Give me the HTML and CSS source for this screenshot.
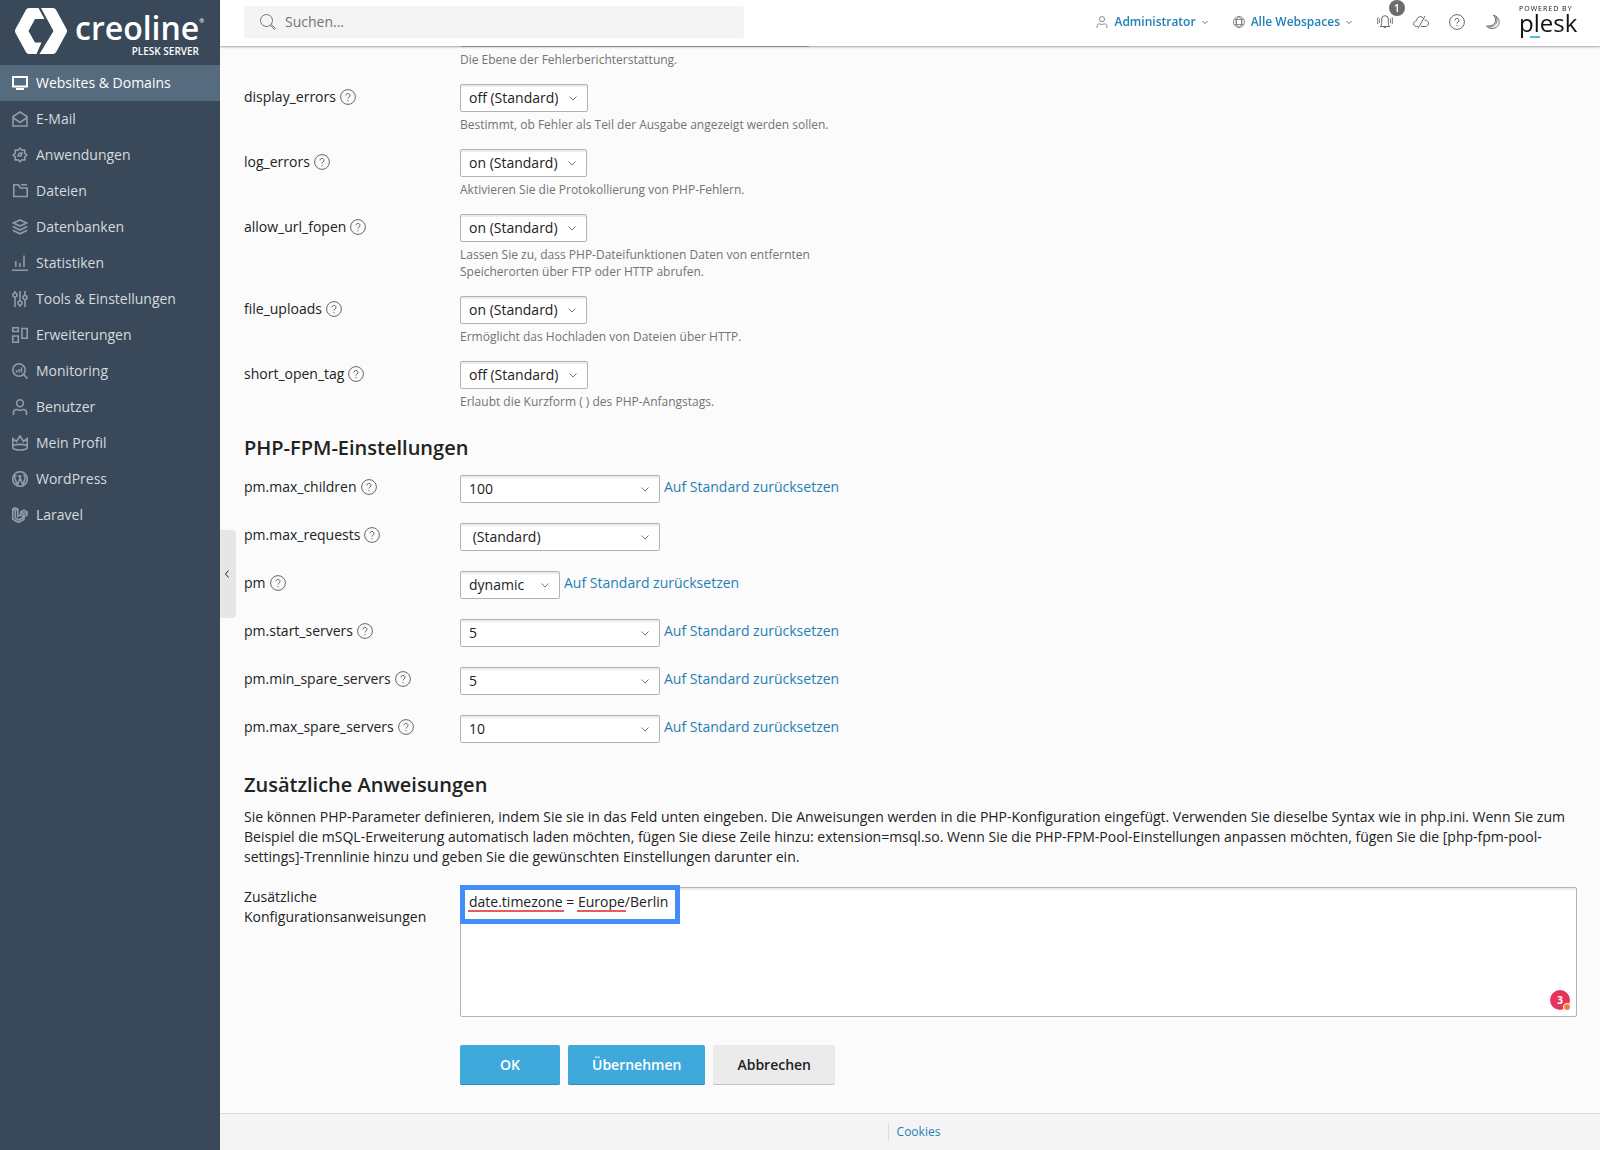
FILE: index.html
```html
<!DOCTYPE html>
<html lang="de">
<head>
    <meta charset="UTF-8">
    <meta name="viewport" content="width=device-width, initial-scale=1.0">
    <title>PHP-Einstellungen</title>
    <link rel="stylesheet" href="styles.css">
</head>
<body>
    <svg class="sprite" aria-hidden="true">
        <symbol id="icon-help" viewBox="0 0 16 16">
            <circle cx="8" cy="8" r="7.4"/>
            <path d="M6 6.400a2 2 0 1 1 3 1.700c-.7.400-1 .7-1 1.500M8 11v1.200"/>
        </symbol>
        <symbol id="icon-down" viewBox="0 0 8 8">
            <path d="M1.500 3 4 5.500 6.500 3"/>
        </symbol>
        <symbol id="icon-user" viewBox="0 0 16 16">
            <circle cx="8" cy="4.200" r="3.400"/>
            <path d="M1.500 16v-2.500c0-1.700 1-3 3-3 1.500 0 2 .8 3.500.8s2-.8 3.500-.8c2 0 3 1.300 3 3V16"/>
        </symbol>
    </svg>

    <aside class="sidebar">
        <a href="#" class="logo">
            <svg class="logo-mark" viewBox="0 0 52 46">
                <path d="M14 0h9.500l6 11H20l-6.500 12L20 34.500h6.500L21.500 46H14q-2 0-3-1.700L.5 25q-1-2 0-4L11 1.700Q12 0 14 0z"/>
                <path d="M26 0h12q2 0 3 1.700L51.500 21q1 2 0 4L41 44.300Q40 46 38 46H24.500L38.500 23z"/>
            </svg>
            <span class="logo-text">
                <span class="logo-name">creoline<sup>®</sup></span>
                <span class="logo-sub">PLESK SERVER</span>
            </span>
        </a>
        <nav class="menu">
            <a href="#" class="menu-item active">
                <svg viewBox="0 0 16 16"><path d="M1 2h14v9.500H1zM4 14h8"/></svg>
                Websites &amp; Domains
            </a>
            <a href="#" class="menu-item">
                <svg viewBox="0 0 16 16"><path d="M1 5.500 8 1l7 4.500V15H1zM1.500 7 8 11.500 14.500 7"/></svg>
                E-Mail
            </a>
            <a href="#" class="menu-item">
                <svg viewBox="0 0 16 16"><path d="M8 1.200 9.900 3.300 12.800 3.200 12.700 6.100 14.800 8 12.700 9.900 12.800 12.800 9.900 12.700 8 14.800 6.100 12.700 3.200 12.800 3.300 9.900 1.200 8 3.300 6.100 3.200 3.200 6.100 3.300z"/><path d="m6 9 1-2.500L10 6 9 9z"/></svg>
                Anwendungen
            </a>
            <a href="#" class="menu-item">
                <svg viewBox="0 0 16 16"><path d="M1.800 1.800h4.500l2 3.200h6.900v8.500H1.800zM9 1.800h6"/></svg>
                Dateien
            </a>
            <a href="#" class="menu-item">
                <svg viewBox="0 0 16 16"><path d="m8 1 6.500 3L8 7 1.500 4zM.8 7.500 8 11l7.200-3.500M.8 11.200 8 14.800l7.200-3.600"/></svg>
                Datenbanken
            </a>
            <a href="#" class="menu-item">
                <svg viewBox="0 0 16 16"><path d="M0 15.200h16M3.800 6v6M8 8v4M12 .5V12"/></svg>
                Statistiken
            </a>
            <a href="#" class="menu-item">
                <svg viewBox="0 0 16 16"><circle cx="3" cy="4" r="2"/><circle cx="8" cy="12" r="2"/><circle cx="13" cy="6.500" r="2"/><path d="M3 0v2M3 6v10M8 0v10M8 14v2M13 0v4.500M13 8.500V16"/></svg>
                Tools &amp; Einstellungen
            </a>
            <a href="#" class="menu-item">
                <svg viewBox="0 0 16 16"><path d="M.8.800h5.500v3.700H.8zM.8 9h5.500v6.200H.8zM10 1.500h5.200v9.700H10z"/></svg>
                Erweiterungen
            </a>
            <a href="#" class="menu-item">
                <svg viewBox="0 0 16 16"><circle cx="7" cy="7" r="6.200"/><path d="m11.500 11.500 4 4M4.500 7v2.500M7 6v3.500M9.500 4.500v5"/></svg>
                Monitoring
            </a>
            <a href="#" class="menu-item">
                <svg viewBox="0 0 16 16"><use href="#icon-user"/></svg>
                Benutzer
            </a>
            <a href="#" class="menu-item">
                <svg viewBox="0 0 16 16"><path d="M.8 3.500 4.500 6.500 8 1l3.500 5.500 3.700-3V13c-2 2.700-12.400 2.700-14.400 0zM1.500 10.500c3-1.500 10-1.500 13 0"/></svg>
                Mein Profil
            </a>
            <a href="#" class="menu-item">
                <svg viewBox="0 0 16 16"><circle cx="8" cy="8" r="7.300"/><path d="m2 5 3.500 9L8 7.500 6.800 4.800M7.500 5l3.300 9 2.400-7c.4-1.500-1.500-2-1.200-3.500M1.700 5h3M6 5h3.500"/></svg>
                WordPress
            </a>
            <a href="#" class="menu-item">
                <svg viewBox="0 0 16 16"><path d="M.8 2 3.300.8 5.800 2v7.500l3-1.700V5l3-1.800L15 5v3l-3 1.700v2.500L6.500 15.500.8 12.200zM.8 2l2.500 1.300V11l3.200 2 5.300-3M3.300 3.300 5.800 2M8.800 5l3 1.700L15 5M11.800 6.700v3l-3-1.900"/></svg>
                Laravel
            </a>
        </nav>
    </aside>

    <button type="button" class="collapse" aria-label="Menü einklappen">
        <svg viewBox="0 0 8 8"><path d="M5.500.5 2.500 4l3 3.500"/></svg>
    </button>

    <div class="page">
        <header class="topbar">
            <label class="search">
                <svg viewBox="0 0 16 16"><circle cx="6.500" cy="6.500" r="6"/><path d="m10.700 11.500 1-.8 3.800 3.700-1.100 1.100z"/></svg>
                <input type="search" placeholder="Suchen..." aria-label="Suchen">
            </label>
            <div class="tools">
                <a href="#" class="tool-link">
                    <svg class="icon-small" viewBox="0 0 16 16"><use href="#icon-user"/></svg>
                    Administrator
                    <svg class="icon-arrow"><use href="#icon-down"/></svg>
                </a>
                <a href="#" class="tool-link">
                    <svg class="icon-small" viewBox="0 0 16 16"><circle cx="8" cy="8" r="7.300"/><path d="M8 .7c-5 4-5 10.600 0 14.600M8 .7c5 4 5 10.600 0 14.600M2 4.500h12M2 11.500h12M4.300 4.500v7M11.700 4.500v7"/></svg>
                    Alle Webspaces
                    <svg class="icon-arrow"><use href="#icon-down"/></svg>
                </a>
                <div class="tool-icons">
                    <button type="button" class="tool-button" aria-label="Benachrichtigungen">
                        <svg viewBox="0 0 16 16"><path d="M3.200 12.500c1.200-1 1.500-2 1.500-4V5a3.300 3.300 0 0 1 6.600 0v3.500c0 2 .3 3 1.500 4zM6.800 12.500c0 1.800 2.400 1.800 2.400 0M2.800 4.500c-.7 1.300-.7 3.200 0 4.500M1 3.500c-1 2-1 4.500 0 6.500M13.200 4.500c.7 1.300.7 3.200 0 4.500M15 3.500c1 2 1 4.500 0 6.500"/></svg>
                        <span class="count">1</span>
                    </button>
                    <button type="button" class="tool-button" aria-label="Cloud">
                        <svg viewBox="0 0 16 16"><path d="M5 12.500H3.500C-.5 12.500-.3 7 3.500 6.800 4 2.500 8 1.500 10 4M11.500 6c5.300 0 5.300 6.500.5 6.500H8M12 2 5 14.500"/></svg>
                    </button>
                    <button type="button" class="tool-button" aria-label="Hilfe">
                        <svg><use href="#icon-help"/></svg>
                    </button>
                    <button type="button" class="tool-button" aria-label="Dunkler Modus">
                        <svg viewBox="0 0 16 16"><path d="M8.500 1c8 3 7.500 13-1.500 13.500-2.500 0-4.500-1-5.500-2.500C9.500 13 13.500 6.500 8.500 1zM3 13c7 .5 11-5 8-10.500"/></svg>
                    </button>
                </div>
                <a href="#" class="plesk">
                    <span class="plesk-by">POWERED BY</span>
                    <span class="plesk-name">plesk</span>
                </a>
            </div>
        </header>

        <main class="content">
            <form>
                <div class="field">
                    <div class="field-label"></div>
                    <div class="field-control">
                        <input type="text" class="text-input" aria-labelledby="error-hint">
                        <p class="hint" id="error-hint">Die Ebene der Fehlerberichterstattung.</p>
                    </div>
                </div>
                <div class="field">
                    <div class="field-label"><label for="display_errors">display_errors</label><svg class="help"><use href="#icon-help"/></svg></div>
                    <div class="field-control">
                        <select id="display_errors"><option>off (Standard)</option></select>
                        <p class="hint">Bestimmt, ob Fehler als Teil der Ausgabe angezeigt werden sollen.</p>
                    </div>
                </div>
                <div class="field">
                    <div class="field-label"><label for="log_errors">log_errors</label><svg class="help"><use href="#icon-help"/></svg></div>
                    <div class="field-control">
                        <select id="log_errors"><option>on (Standard)</option></select>
                        <p class="hint">Aktivieren Sie die Protokollierung von PHP-Fehlern.</p>
                    </div>
                </div>
                <div class="field">
                    <div class="field-label"><label for="allow_url_fopen">allow_url_fopen</label><svg class="help"><use href="#icon-help"/></svg></div>
                    <div class="field-control">
                        <select id="allow_url_fopen"><option>on (Standard)</option></select>
                        <p class="hint">Lassen Sie zu, dass PHP-Dateifunktionen Daten von entfernten Speicherorten über FTP oder HTTP abrufen.</p>
                    </div>
                </div>
                <div class="field">
                    <div class="field-label"><label for="file_uploads">file_uploads</label><svg class="help"><use href="#icon-help"/></svg></div>
                    <div class="field-control">
                        <select id="file_uploads"><option>on (Standard)</option></select>
                        <p class="hint">Ermöglicht das Hochladen von Dateien über HTTP.</p>
                    </div>
                </div>
                <div class="field">
                    <div class="field-label"><label for="short_open_tag">short_open_tag</label><svg class="help"><use href="#icon-help"/></svg></div>
                    <div class="field-control">
                        <select id="short_open_tag"><option>off (Standard)</option></select>
                        <p class="hint">Erlaubt die Kurzform ( ) des PHP-Anfangstags.</p>
                    </div>
                </div>

                <h2>PHP-FPM-Einstellungen</h2>
                <div class="field fpm">
                    <div class="field-label"><label for="max_children">pm.max_children</label><svg class="help"><use href="#icon-help"/></svg></div>
                    <div class="field-row">
                        <select id="max_children" class="wide"><option>100</option></select>
                        <a href="#">Auf Standard zurücksetzen</a>
                    </div>
                </div>
                <div class="field fpm">
                    <div class="field-label"><label for="max_requests">pm.max_requests</label><svg class="help"><use href="#icon-help"/></svg></div>
                    <div class="field-row">
                        <select id="max_requests" class="wide"><option>&nbsp;(Standard)</option></select>
                    </div>
                </div>
                <div class="field fpm">
                    <div class="field-label"><label for="pm">pm</label><svg class="help"><use href="#icon-help"/></svg></div>
                    <div class="field-row">
                        <select id="pm" class="narrow"><option>dynamic</option></select>
                        <a href="#">Auf Standard zurücksetzen</a>
                    </div>
                </div>
                <div class="field fpm">
                    <div class="field-label"><label for="start_servers">pm.start_servers</label><svg class="help"><use href="#icon-help"/></svg></div>
                    <div class="field-row">
                        <select id="start_servers" class="wide"><option>5</option></select>
                        <a href="#">Auf Standard zurücksetzen</a>
                    </div>
                </div>
                <div class="field fpm">
                    <div class="field-label"><label for="min_spare">pm.min_spare_servers</label><svg class="help"><use href="#icon-help"/></svg></div>
                    <div class="field-row">
                        <select id="min_spare" class="wide"><option>5</option></select>
                        <a href="#">Auf Standard zurücksetzen</a>
                    </div>
                </div>
                <div class="field fpm">
                    <div class="field-label"><label for="max_spare">pm.max_spare_servers</label><svg class="help"><use href="#icon-help"/></svg></div>
                    <div class="field-row">
                        <select id="max_spare" class="wide"><option>10</option></select>
                        <a href="#">Auf Standard zurücksetzen</a>
                    </div>
                </div>

                <h2>Zusätzliche Anweisungen</h2>
                <p class="intro">Sie können PHP-Parameter definieren, indem Sie sie in das Feld unten eingeben. Die Anweisungen werden in die PHP-Konfiguration eingefügt. Verwenden Sie dieselbe Syntax wie in php.ini. Wenn Sie zum Beispiel die mSQL-Erweiterung automatisch laden möchten, fügen Sie diese Zeile hinzu: extension=msql.so. Wenn Sie die PHP-FPM-Pool-Einstellungen anpassen möchten, fügen Sie die [php-fpm-pool-settings]-Trennlinie hinzu und geben Sie die gewünschten Einstellungen darunter ein.</p>
                <div class="field directives">
                    <div class="field-label"><label for="directives">Zusätzliche Konfigurationsanweisungen</label></div>
                    <div class="editor">
                        <textarea id="directives" spellcheck="false">date.timezone = Europe/Berlin</textarea>
                        <div class="highlight"></div>
                        <span class="typo typo-timezone"></span>
                        <span class="typo typo-europe"></span>
                        <span class="errors">3</span>
                    </div>
                </div>
                <div class="actions">
                    <button type="submit" class="btn primary">OK</button>
                    <button type="button" class="btn primary">Übernehmen</button>
                    <button type="button" class="btn">Abbrechen</button>
                </div>
            </form>
        </main>

        <footer class="footer">
            <a href="#">Cookies</a>
        </footer>
    </div>
</body>
</html>
```

FILE: styles.css
```css
* {
    box-sizing: border-box;
}
body {
    display: flex;
    min-height: 100vh;
    margin: 0;
    font-family: "Open Sans", "Noto Sans", sans-serif;
    font-size: 14px;
    line-height: 20px;
    color: #222;
    background-color: #fbfbfb;
}
a {
    color: #1f81b5;
    text-decoration: none;
}
a:hover {
    text-decoration: underline;
}
button, input, select, textarea {
    font: inherit;
    color: inherit;
}
svg {
    flex: none;
    fill: none;
    stroke: currentColor;
}
.sprite {
    position: absolute;
    width: 0;
    height: 0;
}

/* Sidebar */
.sidebar {
    flex: none;
    width: 220px;
    background-color: #394959;
}
.logo {
    display: flex;
    gap: 8px;
    height: 65px;
    padding: 8px 0 0 15px;
    color: #fff;
}
.logo:hover {
    text-decoration: none;
}
.logo-mark {
    width: 52px;
    height: 46px;
    fill: #fff;
    stroke: none;
}
.logo-text {
    display: flex;
    flex-direction: column;
    width: 124px;
}
.logo-name {
    font-size: 32px;
    line-height: 40px;
    font-weight: 600;
    white-space: nowrap;
}
.logo-name sup {
    font-size: 6px;
    line-height: 6px;
    vertical-align: 17px;
}
.logo-sub {
    font-size: 10px;
    line-height: 6px;
    font-weight: 600;
    text-align: right;
}
.menu-item {
    display: flex;
    align-items: center;
    gap: 8px;
    height: 36px;
    padding: 0 12px;
    color: #d5dadf;
}
.menu-item svg {
    width: 16px;
    height: 16px;
    stroke-width: 1.6;
    color: #929ca6;
}
.menu-item.active {
    color: #fff;
    background-color: #566b7e;
}
.menu-item.active svg {
    stroke-width: 2;
    color: #fff;
}
.collapse {
    position: fixed;
    top: 50%;
    left: 220px;
    width: 16px;
    height: 88px;
    margin-top: -45px;
    padding: 0 3px;
    border: none;
    border-radius: 0 4px 4px 0;
    background-color: #e6e6e6;
}
.collapse svg {
    display: block;
    width: 8px;
    height: 8px;
}

/* Top bar */
.page {
    flex: 1;
    display: flex;
    flex-direction: column;
    min-width: 0;
}
.topbar {
    position: fixed;
    top: 0;
    left: 220px;
    right: 0;
    z-index: 1;
    display: flex;
    justify-content: space-between;
    height: 46px;
    padding: 6px 22px 0 24px;
    background-color: #fff;
    box-shadow: 0 1px 2px rgba(0,0,0,0.35);
}
.search {
    display: flex;
    align-items: center;
    gap: 9px;
    width: 500px;
    height: 32px;
    padding: 0 16px;
    border-radius: 3px;
    background-color: #f4f4f4;
    color: #737373;
}
.search svg {
    width: 16px;
    height: 16px;
}
.search input {
    flex: 1;
    padding: 0;
    border: none;
    outline: none;
    background: none;
}
.search input::placeholder {
    color: #737373;
}
.tools {
    display: flex;
    align-items: center;
    height: 32px;
    color: #666;
}
.tool-link {
    display: flex;
    align-items: center;
    margin-right: 24px;
    font-size: 12px;
    font-weight: 600;
}
.tool-link svg {
    color: #666;
}
.icon-small {
    width: 12px;
    height: 12px;
    margin-right: 6px;
}
.icon-arrow {
    width: 8px;
    height: 8px;
    margin-left: 5px;
}
.tool-icons {
    display: flex;
    gap: 20px;
    margin-right: 18px;
}
.tool-button {
    position: relative;
    width: 16px;
    height: 16px;
    padding: 0;
    border: none;
    background: none;
}
.tool-button svg {
    display: block;
    width: 16px;
    height: 16px;
}
.count {
    position: absolute;
    top: -14px;
    left: 12px;
    width: 16px;
    border-radius: 8px;
    font-size: 11px;
    line-height: 16px;
    font-weight: 600;
    color: #fff;
    background-color: #6c6c6c;
}
.plesk {
    position: relative;
    display: flex;
    flex-direction: column;
    align-self: flex-start;
    width: 59px;
    color: #111;
}
.plesk::after {
    content: "";
    position: absolute;
    top: 30px;
    left: 11px;
    width: 10px;
    height: 2px;
    background-color: #53bce6;
}
.plesk-by {
    font-size: 7px;
    line-height: 6px;
    letter-spacing: 1px;
    white-space: nowrap;
}
.plesk-name {
    font-size: 24px;
    line-height: 22px;
}

/* Settings form */
.content {
    flex: 1;
    padding: 19px 23px 28px 24px;
}
.field {
    display: flex;
    margin-bottom: 16px;
}
.field-label {
    display: flex;
    align-items: flex-start;
    gap: 4px;
    flex: none;
    width: 216px;
    padding-top: 3px;
}
.help {
    width: 16px;
    height: 16px;
    margin-top: 2px;
    color: #666;
}
.text-input {
    display: block;
    width: 350px;
    height: 28px;
    border: 1px solid #b2b2b2;
    border-radius: 2px;
}
select {
    display: block;
    height: 28px;
    padding: 0 28px 0 8px;
    border: 1px solid #b2b2b2;
    border-radius: 2px;
    appearance: none;
    background: #fff url("data:image/svg+xml,%3Csvg xmlns='http://www.w3.org/2000/svg' width='10' height='10' fill='none' stroke='%23777'%3E%3Cpath d='M1.500 3.500 5 7l3.500-3.500'/%3E%3C/svg%3E") no-repeat right 9px center;
    box-shadow: inset 0 2px 0 #ececec;
}
.wide {
    width: 200px;
}
.narrow {
    width: 100px;
}
.hint {
    max-width: 370px;
    margin: 4px 0 0;
    font-size: 12px;
    line-height: 17px;
    color: #737373;
}
h2 {
    margin: 24px 0 13px;
    font-size: 20px;
    line-height: 28px;
    font-weight: 600;
}
.fpm {
    margin-bottom: 20px;
}
.fpm .field-label {
    padding-top: 2px;
}
.fpm + h2 {
    margin: 28px 0 8px;
}
.field-row {
    display: flex;
    gap: 4px;
}
.field-row a {
    padding-top: 2px;
}
.intro {
    margin: 0 0 20px;
}
.directives {
    margin-bottom: 28px;
}
.directives .field-label {
    padding-top: 0;
}
.editor {
    position: relative;
    flex: 1;
}
textarea {
    display: block;
    width: 100%;
    height: 130px;
    padding: 4px 8px;
    border: 1px solid #b2b2b2;
    border-radius: 2px;
    background-color: #fff;
    box-shadow: inset 0 2px 0 #ececec;
    resize: none;
}
.highlight {
    position: absolute;
    top: -2px;
    left: 0;
    width: 220px;
    height: 39px;
    border: 5px solid #448cfa;
    pointer-events: none;
}
.typo {
    position: absolute;
    top: 23px;
    height: 2px;
    background-color: #e65a62;
}
.typo-timezone {
    left: 8px;
    width: 96px;
}
.typo-europe {
    left: 117px;
    width: 49px;
}
.errors {
    position: absolute;
    right: 7px;
    bottom: 7px;
    width: 20px;
    border-radius: 10px;
    font-size: 10px;
    line-height: 20px;
    font-weight: 700;
    text-align: center;
    color: #fff;
    background-color: #e73458;
}
.errors::after {
    content: "";
    position: absolute;
    right: -1px;
    bottom: -1px;
    width: 6px;
    height: 6px;
    border: 1px solid #fff;
    border-radius: 50%;
    background-color: #ee7f31;
}
.actions {
    display: flex;
    gap: 8px;
    padding-left: 216px;
}
.btn {
    min-width: 100px;
    height: 40px;
    padding: 0 24px;
    border: none;
    border-radius: 2px;
    font-weight: 600;
    background-color: #ebebeb;
    box-shadow: inset 0 -1px 0 #c4c4c4;
}
.btn.primary {
    color: #fff;
    background-color: #3fa9dc;
    box-shadow: inset 0 -1px 0 #338cb7;
}
.footer {
    display: flex;
    justify-content: center;
    align-items: center;
    height: 37px;
    padding-left: 8px;
    border-top: 1px solid #dcdcdc;
    font-size: 12px;
    line-height: 16px;
    background-color: #f4f4f4;
}
.footer a {
    padding-left: 8px;
    border-left: 1px solid #dcdcdc;
}
```
